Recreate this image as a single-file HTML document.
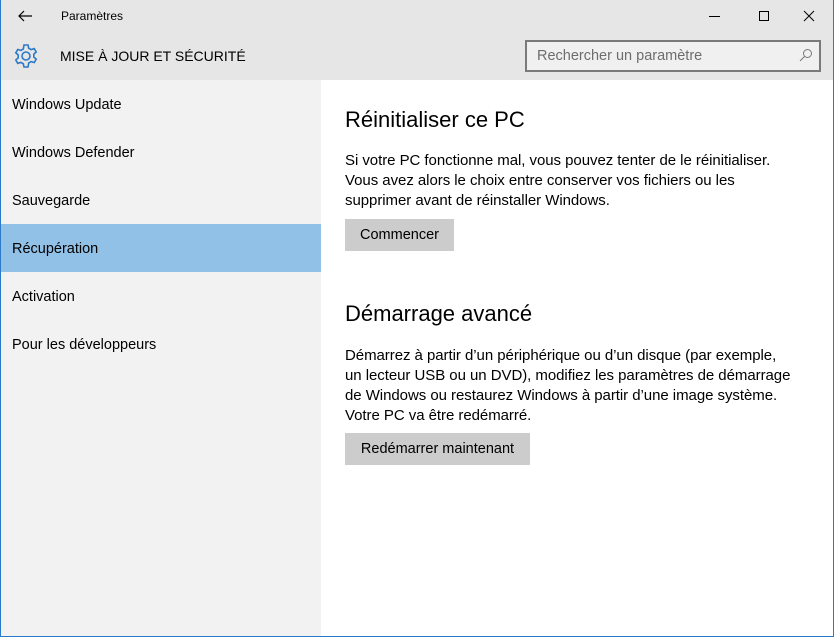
<!DOCTYPE html>
<html><head><meta charset="utf-8"><style>
*{margin:0;padding:0;box-sizing:border-box}
body{width:834px;height:637px;overflow:hidden;font-family:"Liberation Sans",sans-serif;color:#000;position:relative;background:#fff}
.win{position:absolute;left:0;top:0;width:834px;height:637px;border:1px solid #2b79c9;border-top:none}
.hdr{position:absolute;left:0;top:0;width:834px;height:80px;background:#e6e6e6}
.side{position:absolute;left:0;top:80px;width:321px;height:557px;background:#f2f2f2}
.item{position:absolute;left:12px;font-size:14.5px;color:#000}
.sel{position:absolute;left:0;top:224px;width:321px;height:48px;background:#92c1e8}
.t{position:absolute;font-size:14px}
h2{position:absolute;left:345px;font-weight:normal;font-size:22px;color:#000}
p{position:absolute;left:345px;font-size:15px;line-height:20px;width:480px;color:#000;letter-spacing:-0.05px}
.btn{position:absolute;left:345px;height:32px;background:#cccccc;font-size:14.5px;line-height:32px;text-align:center}
.search{position:absolute;left:525px;top:40px;width:296px;height:32px;border:2px solid #7a7a7a;background:#f0f0f0;font-size:14.5px;color:#6d6d6d;line-height:28px;padding-left:10px}
</style></head><body>
<div class="hdr"></div>
<div class="side"></div>
<div class="sel"></div>
<svg style="position:absolute;left:17px;top:8px" width="16" height="16" viewBox="0 0 16 16"><path d="M15 8H2M7 3L2 8l5 5" fill="none" stroke="#000" stroke-width="1.2"/></svg>
<div class="t" style="left:61px;top:9px;font-size:12px">Paramètres</div>
<svg style="position:absolute;left:709px;top:9px" width="110" height="14" viewBox="0 0 110 14"><path d="M0 7.5h11" stroke="#000" stroke-width="1"/><rect x="50.5" y="2.5" width="9" height="9" fill="none" stroke="#000"/><path d="M95 2l10 10M105 2L95 12" stroke="#000" stroke-width="1"/></svg>
<svg style="position:absolute;left:13px;top:43px" width="26" height="26" viewBox="0 0 26 26"><g fill="none" stroke="#2b79c9" stroke-width="1.6"><path d="M11 2h4l.7 3.2 2.4 1.4 3.1-1 2 3.4-2.4 2.2v2.8l2.4 2.2-2 3.4-3.1-1-2.4 1.4L15 24h-4l-.7-3.2-2.4-1.4-3.1 1-2-3.4 2.4-2.2v-2.8L2.8 9.8l2-3.4 3.1 1 2.4-1.4z"/><circle cx="13" cy="13" r="4"/></g></svg>
<div class="t" style="left:60px;top:48px;font-size:14px">MISE À JOUR ET SÉCURITÉ</div>
<div class="search">Rechercher un paramètre</div>
<svg style="position:absolute;left:799px;top:48px" width="14" height="14" viewBox="0 0 14 14"><circle cx="8.5" cy="5.5" r="4" fill="none" stroke="#777"/><path d="M5.5 8.5L1 13" stroke="#777"/></svg>
<div class="item" style="top:97px">Windows Update</div>
<div class="item" style="top:145px">Windows Defender</div>
<div class="item" style="top:193px">Sauvegarde</div>
<div class="item" style="top:241px">Récupération</div>
<div class="item" style="top:289px">Activation</div>
<div class="item" style="top:337px">Pour les développeurs</div>
<h2 style="top:107px">Réinitialiser ce PC</h2>
<p style="top:151px">Si votre PC fonctionne mal, vous pouvez tenter de le réinitialiser.<br>Vous avez alors le choix entre conserver vos fichiers ou les<br>supprimer avant de réinstaller Windows.</p>
<div class="btn" style="top:219px;width:109px">Commencer</div>
<h2 style="top:301px">Démarrage avancé</h2>
<p style="top:346px">Démarrez à partir d’un périphérique ou d’un disque (par exemple,<br>un lecteur USB ou un DVD), modifiez les paramètres de démarrage<br>de Windows ou restaurez Windows à partir d’une image système.<br>Votre PC va être redémarré.</p>
<div class="btn" style="top:433px;width:185px">Redémarrer maintenant</div>
<div class="win"></div>
</body></html>
